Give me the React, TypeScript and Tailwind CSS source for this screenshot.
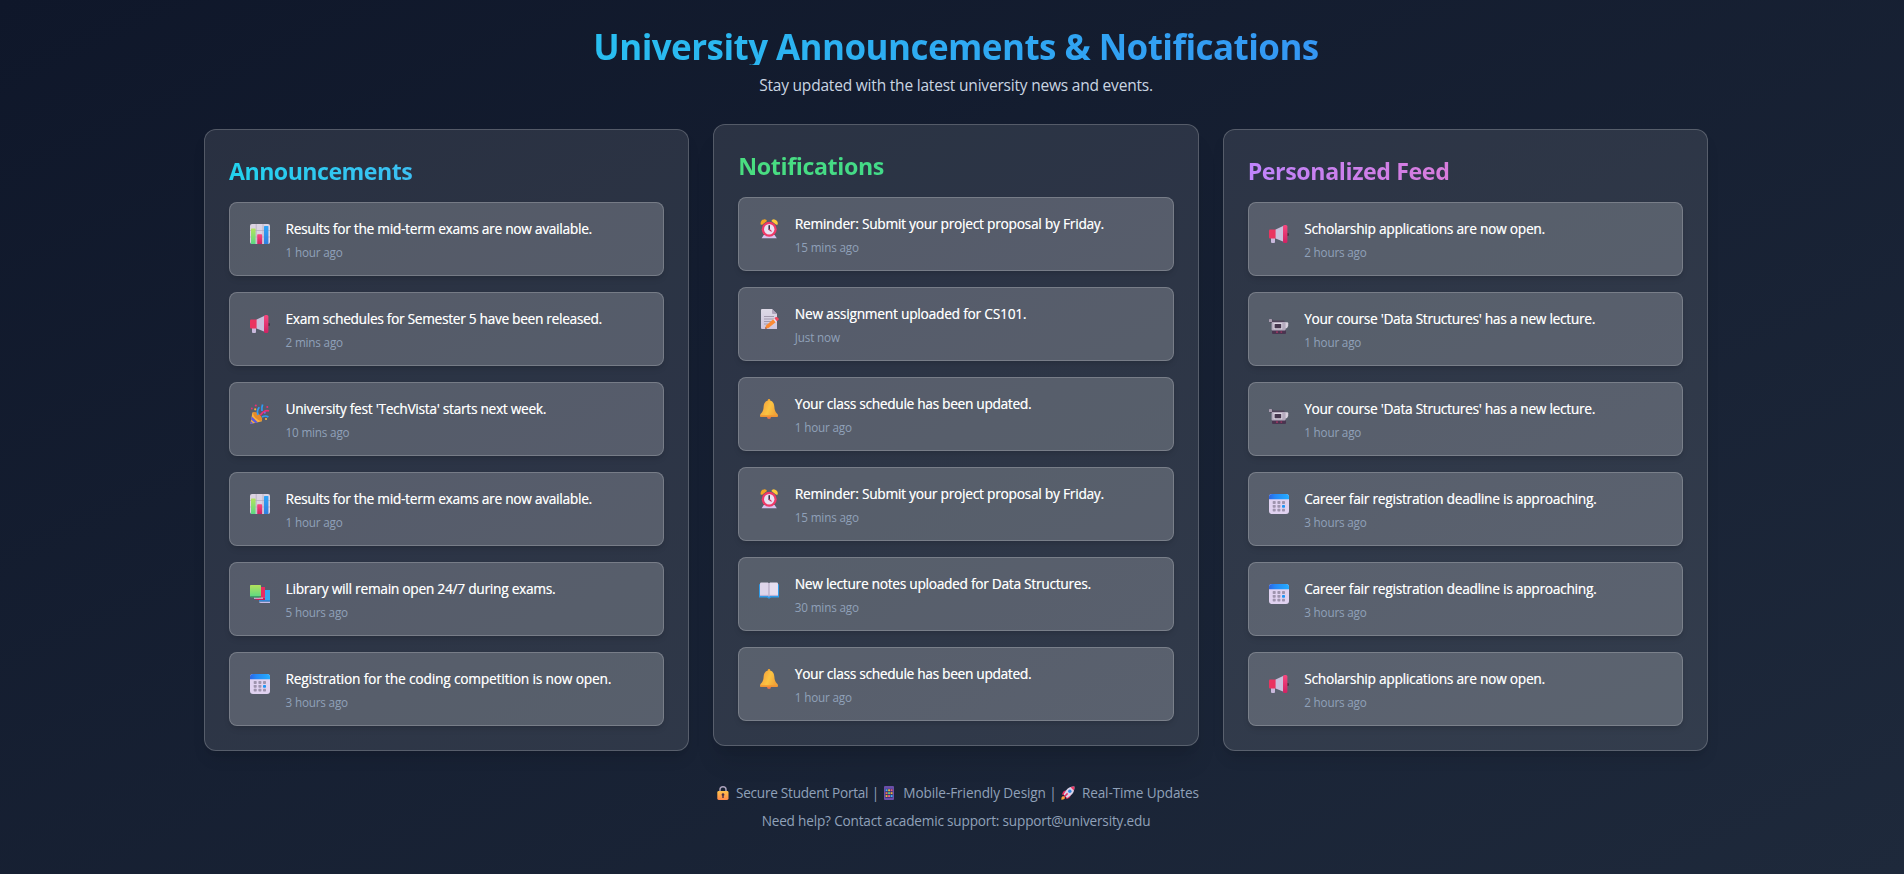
import type { ReactNode } from "react";

type IconName =
  | "chart"
  | "megaphone"
  | "party"
  | "books"
  | "calendar"
  | "alarm"
  | "memo"
  | "bell"
  | "book"
  | "camera";

type Item = { icon: IconName; text: string; time: string; tracking?: string };

function Gradients() {
  return (
    <svg width="0" height="0" className="absolute" aria-hidden="true">
      <defs>
        <linearGradient id="greenBar" x1="0" y1="0" x2="0" y2="1">
          <stop offset="0" stopColor="#b4e35c" />
          <stop offset="1" stopColor="#5bd884" />
        </linearGradient>
        <linearGradient id="blueBar" x1="0" y1="0" x2="0" y2="1">
          <stop offset="0" stopColor="#2fa4f7" />
          <stop offset="1" stopColor="#2f7fe0" />
        </linearGradient>
        <linearGradient id="pink" x1="0" y1="0" x2="0" y2="1">
          <stop offset="0" stopColor="#f8487f" />
          <stop offset="1" stopColor="#cf2263" />
        </linearGradient>
        <linearGradient id="calHead" x1="0" y1="0" x2="1" y2="0">
          <stop offset="0" stopColor="#2c63e2" />
          <stop offset="0.3" stopColor="#2587f5" />
          <stop offset="1" stopColor="#25adff" />
        </linearGradient>
        <linearGradient id="gold" x1="0" y1="0" x2="1" y2="0.4">
          <stop offset="0" stopColor="#f3953a" />
          <stop offset="0.6" stopColor="#fcc442" />
          <stop offset="1" stopColor="#f0a338" />
        </linearGradient>
        <linearGradient id="page" x1="0" y1="0" x2="0" y2="1">
          <stop offset="0" stopColor="#ddd9e6" />
          <stop offset="1" stopColor="#cfc6de" />
        </linearGradient>
        <linearGradient id="lockBody" x1="0" y1="0" x2="0" y2="1">
          <stop offset="0" stopColor="#ffc24a" />
          <stop offset="1" stopColor="#ff8a4c" />
        </linearGradient>
      </defs>
    </svg>
  );
}

const drawings: Record<IconName, ReactNode> = {
  chart: (
    <>
      <rect width="20" height="20" rx="2" fill="#dbd3e2" />
      <path d="M0 6.5H20M0 13H20M6.2 0V20M13 0V20" stroke="#b3a9bf" strokeWidth="0.7" />
      <rect x="1" y="4.4" width="4.6" height="15.6" rx="0.6" fill="url(#greenBar)" />
      <rect x="7.2" y="10.3" width="4.9" height="9.7" rx="0.6" fill="url(#pink)" />
      <rect x="14" y="2" width="4.4" height="18" rx="0.6" fill="url(#blueBar)" />
    </>
  ),
  megaphone: (
    <>
      <rect x="17.5" y="9" width="2.4" height="3" rx="1" fill="#3d3440" />
      <path d="M2 13H6V18Q6 19 5 19H3Q2 19 2 18Z" fill="#c9b9dc" />
      <path d="M1 5.4H7V14.4H1Q0 14.4 0 13.4V6.4Q0 5.4 1 5.4Z" fill="#ea3460" />
      <path d="M6.6 5.4L14.6 1.8V17.8L6.6 14.4Z" fill="#c9c0dc" />
      <rect x="14" y="1" width="4.4" height="18" rx="1.6" fill="url(#pink)" />
    </>
  ),
  party: (
    <>
      <path d="M0.4 20L2.4 8.4Q6 8 9 12T12 17.2Z" fill="#fbb03b" />
      <path d="M1.7 12.5L8 18.4L5.2 19L1 15.5ZM0.8 17L3.4 19.4L0.4 20Z" fill="#5a5ae0" />
      <ellipse cx="7.7" cy="12.4" rx="5.6" ry="2.6" transform="rotate(43 7.7 12.4)" fill="#e28a2c" />
      <path d="M8 11Q6.5 6.5 9.3 3.3" stroke="#2f9bf2" strokeWidth="1.7" fill="none" />
      <path d="M12 7Q11.5 3.2 12.6 0.5" stroke="#2f9bf2" strokeWidth="1.8" fill="none" />
      <path d="M10.3 11.3Q14.5 5.5 19 7" stroke="#ec2f77" strokeWidth="1.7" fill="none" />
      <path d="M12 13Q15.5 11 18.4 13" stroke="#2f9bf2" strokeWidth="1.7" fill="none" />
      <circle cx="5.8" cy="1.5" r="1.1" fill="#ec2f77" />
      <circle cx="1.8" cy="4.5" r="0.9" fill="#ec2f77" />
      <circle cx="5.2" cy="5.3" r="1.1" fill="#fbb03b" />
      <circle cx="17.3" cy="3" r="1" fill="#ec2f77" />
      <circle cx="16" cy="15" r="1.1" fill="#fbb03b" />
      <circle cx="14.8" cy="8.8" r="1" fill="#8d5fe0" />
    </>
  ),
  books: (
    <>
      <path d="M13 6H20V16H13Z" fill="#34a8f0" />
      <path d="M9 17.4H20V18.9H11Q9 18.9 9 17.4Z" fill="#c9bce8" />
      <path d="M9 16H20V17.5H9Z" fill="#3186d6" />
      <path d="M9 3H15V13.8H9Z" fill="#e92c62" />
      <path d="M5 14H15V16H7Q5 16 5 14Z" fill="#c81e5c" />
      <path d="M4 13.6H13V14.7H4Z" fill="#dccdea" />
      <rect x="0" y="1" width="11" height="12" rx="0.8" fill="url(#greenBar)" />
      <path d="M0 12H11V13.4H1.2Q0 13.4 0 12Z" fill="#3f9f66" />
    </>
  ),
  calendar: (
    <>
      <rect width="20" height="20" rx="3" fill="#e0d2f0" />
      <path d="M0 5.3V3Q0 0 3 0H17Q20 0 20 3V5.3Z" fill="url(#calHead)" />
      <g fill="#9f94ae">
        <rect x="3.7" y="7" width="3" height="2.9" rx="0.7" />
        <rect x="8.4" y="7" width="3" height="2.9" rx="0.7" />
        <rect x="13" y="7" width="3" height="2.9" rx="0.7" />
        <rect x="3.7" y="10.9" width="3" height="2.9" rx="0.7" />
        <rect x="8.4" y="10.9" width="3" height="2.9" rx="0.7" />
        <rect x="3.7" y="14.8" width="3" height="2.7" rx="0.7" />
        <rect x="8.4" y="14.8" width="3" height="2.7" rx="0.7" />
        <rect x="13" y="14.8" width="3" height="2.7" rx="0.7" />
      </g>
      <rect x="13" y="10.9" width="3" height="2.9" rx="0.7" fill="#1d94f5" />
    </>
  ),
  alarm: (
    <>
      <path d="M4.8 16L2.6 19.2H17.8L15.6 16Z" fill="#d6c4ee" />
      <path d="M1.6 5.6Q1.2 1 5.5 0.2Q7.6 0.2 8 2L3.2 5.8Z" fill="#f5a623" />
      <path d="M18.8 5.6Q19.2 1 14.9 0.2Q12.8 0.2 12.4 2L17.2 5.8Z" fill="#ffc83a" />
      <circle cx="10.2" cy="10.3" r="7.5" fill="#ef3a68" />
      <circle cx="10.2" cy="10.3" r="5.2" fill="#e9e0f3" />
      <path d="M10.2 6.8V10.6" stroke="#33283f" strokeWidth="1.5" strokeLinecap="round" />
      <path d="M10.3 10.5L12.2 12.2" stroke="#d8285c" strokeWidth="1.1" strokeLinecap="round" />
    </>
  ),
  memo: (
    <>
      <path d="M3 0H13L18 5V20H3Q2 20 2 19V1Q2 0 3 0Z" fill="url(#page)" />
      <path d="M13 0L18 5H14Q13 5 13 4Z" fill="#aea3bb" />
      <path d="M5 7.5H15M5 10H15M5 12.5H12M5 15H9" stroke="#9c94a8" strokeWidth="0.9" />
      <path d="M6.2 19.8L7 16.4L14.8 9.8L17.2 12.8L9.5 19Z" fill="#fb8a34" />
      <path d="M14.2 10.3L15.6 9.1L18 12.1L16.6 13.2Z" fill="#e5dcee" />
      <path d="M15.4 9.3L16.8 8.1Q18 7.6 19.2 9T19 11.3L17.9 12.2Z" fill="#f4475f" />
      <path d="M6.2 19.8L6.6 18L8 19.4Z" fill="#7b3b3b" />
    </>
  ),
  bell: (
    <>
      <circle cx="10" cy="18" r="2" fill="#e8734a" />
      <circle cx="10" cy="1.4" r="1.3" fill="#f5a832" />
      <path
        d="M10 1.4C13.6 1.4 15.2 4.2 15.4 8C15.6 12 17 13.4 18.6 15.2Q19.6 17.8 17.6 18H2.4Q0.4 17.8 1.4 15.2C3 13.4 4.4 12 4.6 8C4.8 4.2 6.4 1.4 10 1.4Z"
        fill="url(#gold)"
      />
      <path d="M1.2 16.3H18.8Q18.9 17.9 17.6 18H2.4Q1.1 17.9 1.2 16.3Z" fill="#f09433" />
    </>
  ),
  book: (
    <>
      <path d="M0 6Q0 5 1 5H19Q20 5 20 6V18.5H12L10 19.8L8 18.5H0Z" fill="#2f9be8" />
      <path d="M1 4.8Q1 3.6 2.2 3.6H8.8L10 4.2V17.5L9 16.8H1Z" fill="#ded5ea" />
      <path d="M19 4.8Q19 3.6 17.8 3.6H11.2L10 4.2V17.5L11 16.8H19Z" fill="#e6deef" />
      <path d="M10 4.2V17.6" stroke="#a396b5" strokeWidth="0.9" />
      <path d="M1 16.4H9.2L10 17.2L10.8 16.4H19" stroke="#b9a9d2" strokeWidth="0.8" fill="none" />
    </>
  ),
  camera: (
    <>
      <path d="M0 5H3.4V6.4H15.4V9H1.2V8H0Z" fill="#52465c" />
      <rect x="0" y="5" width="3" height="3" rx="0.6" fill="#a89db0" />
      <rect x="3" y="16" width="14" height="4" rx="1" fill="#493550" />
      <rect x="7" y="17.4" width="2" height="1.4" fill="#a13764" />
      <rect x="11.5" y="17.4" width="1.6" height="1.4" fill="#a13764" />
      <path d="M16 8.2H18.3Q19.2 8.2 19.2 9.2V12Q18.6 14.6 16 14.8Z" fill="#d9d2df" />
      <rect x="2.6" y="8" width="14" height="8.6" rx="1" fill="#b5aabe" />
      <rect x="4.6" y="9" width="8.6" height="6.2" rx="0.6" fill="#dcd5e2" />
      <rect x="5.6" y="9.9" width="6.6" height="4.4" rx="0.5" fill="#47374f" />
    </>
  ),
};

function Lock() {
  return (
    <svg width="12" height="14" viewBox="0 0 12 14" className="block">
      <path d="M3 6V3.6Q3 0.8 6 0.8T9 3.6V6" fill="none" stroke="#a9a0b8" strokeWidth="1.5" />
      <rect x="0.3" y="5" width="11.2" height="9" rx="1.4" fill="url(#lockBody)" />
      <path d="M6 7.2A1.4 1.4 0 0 1 6.7 9.8V12H5.3V9.8A1.4 1.4 0 0 1 6 7.2Z" fill="#4a2c45" />
    </svg>
  );
}

function Phone() {
  return (
    <svg width="10" height="14" viewBox="0 0 10 14" className="block">
      <rect width="10" height="14" rx="1" fill="#6a4fa8" />
      <rect x="1.3" y="2.8" width="7.4" height="9" fill="#33306e" />
      <rect x="1.6" y="3.3" width="1.9" height="1.9" fill="#3fb6f5" />
      <rect x="4.1" y="3.3" width="1.9" height="1.9" fill="#f0b53a" />
      <rect x="6.6" y="3.3" width="1.9" height="1.9" fill="#ef5d7c" />
      <rect x="1.6" y="6.2" width="1.9" height="1.9" fill="#f3784a" />
      <rect x="4.1" y="6.2" width="1.9" height="1.9" fill="#55cf8c" />
      <rect x="6.6" y="6.2" width="1.9" height="1.9" fill="#f0b53a" />
      <rect x="1.6" y="9.1" width="1.9" height="1.9" fill="#f0b53a" />
      <rect x="4.1" y="9.1" width="1.9" height="1.9" fill="#ef5d7c" />
      <rect x="6.6" y="9.1" width="1.9" height="1.9" fill="#3fb6f5" />
    </svg>
  );
}

function Rocket() {
  return (
    <svg width="14" height="14" viewBox="0 0 14 14" className="block">
      <path d="M0.3 13.7Q0 10.8 2.2 9.8L4.3 11.8Q3.2 14 0.3 13.7Z" fill="#ffa23c" />
      <path d="M5 4.4Q1.8 4.4 1 8.8L4 8.4ZM9.6 9Q9.6 12.2 5.2 13L5.6 10Z" fill="#e92c62" />
      <path d="M13.4 0.6Q13.8 6.4 9.6 9.6L6 12L2.6 8.6L5 4.4Q7.8 0.4 13.4 0.6Z" fill="#dbd3e8" />
      <path d="M13.4 0.6Q13.5 2.6 12.8 4.4L9.6 1.2Q11.4 0.5 13.4 0.6Z" fill="#ef3a68" />
      <circle cx="8.8" cy="5.2" r="1.7" fill="#3186e0" />
      <path d="M3 11L6.6 7.4" stroke="#e92c62" strokeWidth="1.5" />
    </svg>
  );
}

function Entry({ icon, text, time, tracking = "tracking-[-0.22px]" }: Item) {
  return (
    <li className="flex h-[74px] items-start gap-[11.5px] rounded-lg border border-white/20 bg-white/20 p-4 shadow-md">
      <div className="mt-[5px] flex w-7 shrink-0 justify-center">
        <svg width="20" height="20" viewBox="0 0 20 20">
          {drawings[icon]}
        </svg>
      </div>
      <div>
        <p
          className={`text-[13.6px] leading-5 whitespace-nowrap text-white [text-shadow:0.3px_0_0_rgba(255,255,255,0.6)] ${tracking}`}
        >
          {text}
        </p>
        <p className="mt-[5px] text-[11.7px] leading-4 tracking-[-0.17px] text-slate-400">{time}</p>
      </div>
    </li>
  );
}

function Panel({
  title,
  titleClass,
  className,
  items,
}: {
  title: string;
  titleClass: string;
  className: string;
  items: Item[];
}) {
  return (
    <section className={`rounded-xl border border-white/20 bg-white/10 p-6 ${className}`}>
      <h2
        className={`mb-4 bg-clip-text pt-[3px] text-[23.2px] leading-[29px] font-bold text-transparent ${titleClass}`}
      >
        {title}
      </h2>
      <ul className="flex flex-col gap-4">
        {items.map((item, i) => (
          <Entry key={i} {...item} />
        ))}
      </ul>
    </section>
  );
}

const announcements: Item[] = [
  { icon: "chart", text: "Results for the mid-term exams are now available.", time: "1 hour ago" },
  {
    icon: "megaphone",
    text: "Exam schedules for Semester 5 have been released.",
    time: "2 mins ago",
    tracking: "tracking-[-0.25px]",
  },
  {
    icon: "party",
    text: "University fest 'TechVista' starts next week.",
    time: "10 mins ago",
    tracking: "tracking-[-0.23px]",
  },
  { icon: "chart", text: "Results for the mid-term exams are now available.", time: "1 hour ago" },
  { icon: "books", text: "Library will remain open 24/7 during exams.", time: "5 hours ago", tracking: "tracking-[-0.2px]" },
  {
    icon: "calendar",
    text: "Registration for the coding competition is now open.",
    time: "3 hours ago",
    tracking: "tracking-[-0.11px]",
  },
];

const notifications: Item[] = [
  {
    icon: "alarm",
    text: "Reminder: Submit your project proposal by Friday.",
    time: "15 mins ago",
    tracking: "tracking-[-0.19px]",
  },
  {
    icon: "memo",
    text: "New assignment uploaded for CS101.",
    time: "Just now",
    tracking: "tracking-[-0.16px]",
  },
  { icon: "bell", text: "Your class schedule has been updated.", time: "1 hour ago", tracking: "tracking-[-0.25px]" },
  {
    icon: "alarm",
    text: "Reminder: Submit your project proposal by Friday.",
    time: "15 mins ago",
    tracking: "tracking-[-0.19px]",
  },
  { icon: "book", text: "New lecture notes uploaded for Data Structures.", time: "30 mins ago" },
  { icon: "bell", text: "Your class schedule has been updated.", time: "1 hour ago", tracking: "tracking-[-0.25px]" },
];

const feed: Item[] = [
  { icon: "megaphone", text: "Scholarship applications are now open.", time: "2 hours ago", tracking: "tracking-[-0.19px]" },
  {
    icon: "camera",
    text: "Your course 'Data Structures' has a new lecture.",
    time: "1 hour ago",
    tracking: "tracking-[-0.24px]",
  },
  {
    icon: "camera",
    text: "Your course 'Data Structures' has a new lecture.",
    time: "1 hour ago",
    tracking: "tracking-[-0.24px]",
  },
  { icon: "calendar", text: "Career fair registration deadline is approaching.", time: "3 hours ago", tracking: "tracking-[-0.2px]" },
  { icon: "calendar", text: "Career fair registration deadline is approaching.", time: "3 hours ago", tracking: "tracking-[-0.2px]" },
  { icon: "megaphone", text: "Scholarship applications are now open.", time: "2 hours ago", tracking: "tracking-[-0.19px]" },
];

export default function App() {
  return (
    <div className="h-[874px] overflow-hidden bg-[linear-gradient(to_bottom_right,#0f172a,#1e293b)] pt-[25px] pl-[204px] font-['Open_Sans',sans-serif]">
      <Gradients />
      <div className="w-[1504px]">
        <header className="text-center">
          <h1 className="h-10 bg-[linear-gradient(to_right,#22d3ee,#3b82f6)] bg-clip-text pt-[2px] text-[35px] leading-10 font-bold tracking-[-0.56px] text-transparent">
            University Announcements &amp; Notifications
          </h1>
          <p className="mt-2 text-[15.5px] leading-6 tracking-[-0.2px] text-slate-300">
            Stay updated with the latest university news and events.
          </p>
        </header>

        <main className="mt-8 grid grid-cols-3 gap-6">
          <Panel
            title="Announcements"
            titleClass="tracking-[-0.54px] bg-[linear-gradient(to_right,#22d3ee,#60a5fa)]"
            className="shadow-lg"
            items={announcements}
          />
          <Panel
            title="Notifications"
            titleClass="tracking-[-0.38px] bg-[linear-gradient(to_right,#4ade80,#34d399)]"
            className="-translate-y-[5px] shadow-xl"
            items={notifications}
          />
          <Panel
            title="Personalized Feed"
            titleClass="tracking-[-0.4px] bg-[linear-gradient(to_right,#c084fc,#f472b6)]"
            className="shadow-lg"
            items={feed}
          />
        </main>

        <footer className="mt-8 text-[13.6px] leading-5 tracking-[-0.18px] text-slate-400">
          <div className="flex items-center justify-center pl-1 whitespace-nowrap">
            <Lock />
            <span className="ml-[7px] tracking-[-0.26px]">Secure Student Portal</span>
            <span className="ml-[3px] w-2 text-center">|</span>
            <span className="ml-[5px]">
              <Phone />
            </span>
            <span className="ml-[9px] tracking-[-0.1px]">Mobile-Friendly Design</span>
            <span className="ml-[3px] w-2 text-center">|</span>
            <span className="ml-1">
              <Rocket />
            </span>
            <span className="ml-[7px] tracking-[-0.12px]">Real-Time Updates</span>
          </div>
          <p className="mt-2 text-center">Need help? Contact academic support: support@university.edu</p>
        </footer>
      </div>
    </div>
  );
}
